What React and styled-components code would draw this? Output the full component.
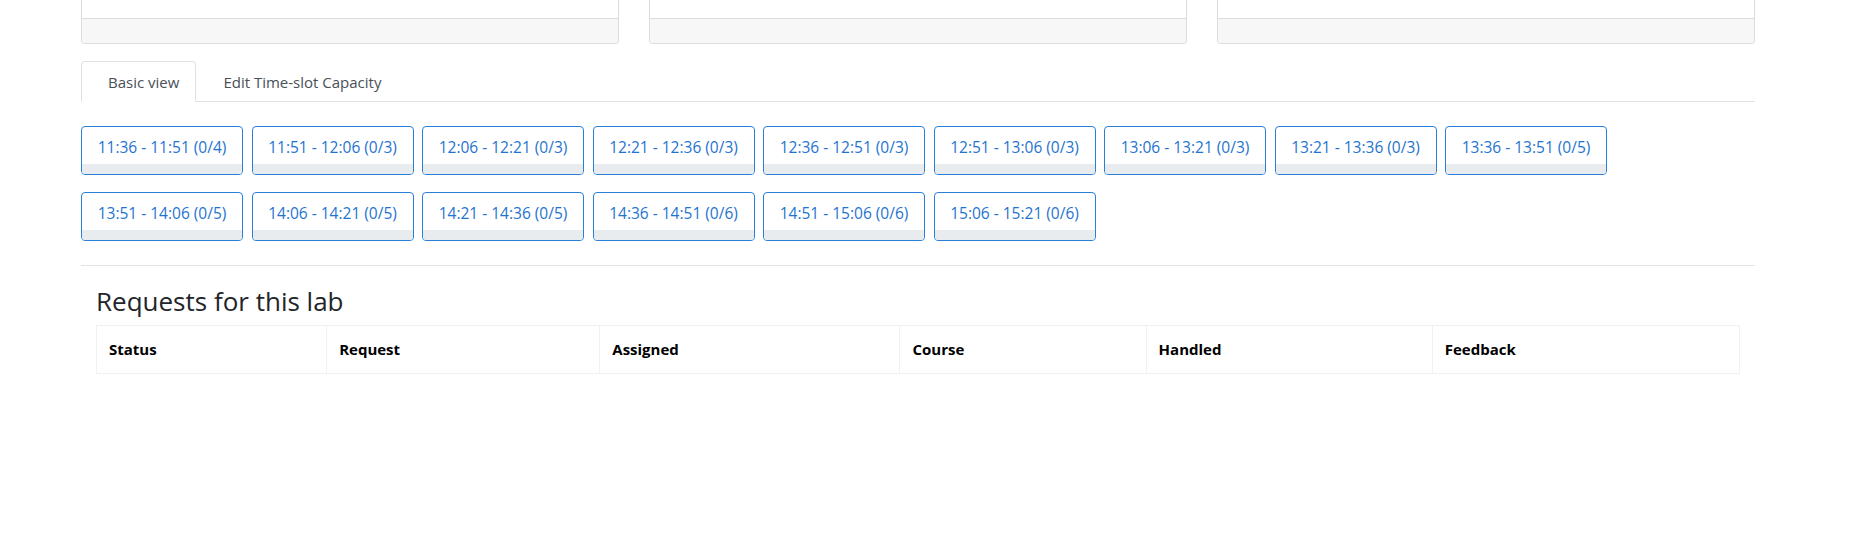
import React from "react";
import styled, { createGlobalStyle } from "styled-components";

const GlobalStyle = createGlobalStyle`
  html, body {
    margin: 0;
    padding: 0;
    background: #ffffff;
  }
  body {
    font-family: "Open Sans", "Noto Sans", Arial, sans-serif;
    font-size: 15px;
    line-height: 1.5;
    color: #212529;
  }
  * { box-sizing: border-box; }
`;

const Page = styled.div`
  width: 1674px;
  margin-left: 81px;
  display: flex;
  flex-direction: column;
`;

const CardRow = styled.div`
  display: grid;
  grid-template-columns: repeat(3, 1fr);
  column-gap: 30px;
`;

const Card = styled.div`
  display: flex;
  flex-direction: column;
  border: 1px solid #dcdcdc;
  border-top: none;
  border-radius: 0 0 4px 4px;
  overflow: hidden;
  background: #fff;
`;

const CardBody = styled.div`
  height: 18px;
`;

const CardFooter = styled.div`
  height: 25px;
  background: #f7f7f7;
  border-top: 1px solid #dcdcdc;
`;

const Tabs = styled.nav`
  display: flex;
  margin-top: 17px;
  border-bottom: 1px solid #dee2e6;
`;

const Tab = styled.div`
  height: 41px;
  margin-bottom: -1px;
  display: flex;
  align-items: center;
  padding: 1px 16px 0 26px;
  font-size: 15px;
  color: #495057;
  border: 1px solid ${(p) => (p.$active ? "#dee2e6" : "transparent")};
  border-bottom-color: ${(p) => (p.$active ? "#ffffff" : "transparent")};
  border-radius: 4px 4px 0 0;
  background: ${(p) => (p.$active ? "#ffffff" : "transparent")};
  cursor: pointer;
`;

const Slots = styled.div`
  display: flex;
  flex-wrap: wrap;
  column-gap: 8.5px;
  row-gap: 17px;
  margin-top: 24px;
`;

const SlotButton = styled.button`
  width: 162px;
  height: 49px;
  padding: 0;
  display: flex;
  flex-direction: column;
  border: 1px solid #2a7fd9;
  border-radius: 4px;
  background: #ffffff;
  overflow: hidden;
  cursor: pointer;
  font-family: inherit;
`;

const SlotLabel = styled.span`
  flex: 1;
  display: flex;
  align-items: center;
  justify-content: center;
  padding-top: 3px;
  font-size: 15.5px;
  color: #1f74d0;
  white-space: nowrap;
`;

const SlotBar = styled.span`
  height: 10px;
  background: #e9ecef;
`;

const Divider = styled.hr`
  margin: 24px 0 0;
  border: 0;
  border-top: 1px solid #e3e3e3;
  width: 100%;
`;

const Section = styled.section`
  padding: 0 15px;
`;

const Heading = styled.h3`
  margin: 20px 0 8px;
  font-size: 26px;
  font-weight: 400;
  line-height: 1.2;
  color: #212529;
`;

const Table = styled.table`
  width: 100%;
  border-collapse: collapse;
  table-layout: fixed;
`;

const Th = styled.th`
  width: ${(p) => p.$w}px;
  padding: 12px 12px;
  text-align: left;
  font-size: 15px;
  font-weight: 700;
  color: #000;
  border: 1px solid #f1f1f1;
`;

const slots = [
  "11:36 - 11:51 (0/4)",
  "11:51 - 12:06 (0/3)",
  "12:06 - 12:21 (0/3)",
  "12:21 - 12:36 (0/3)",
  "12:36 - 12:51 (0/3)",
  "12:51 - 13:06 (0/3)",
  "13:06 - 13:21 (0/3)",
  "13:21 - 13:36 (0/3)",
  "13:36 - 13:51 (0/5)",
  "13:51 - 14:06 (0/5)",
  "14:06 - 14:21 (0/5)",
  "14:21 - 14:36 (0/5)",
  "14:36 - 14:51 (0/6)",
  "14:51 - 15:06 (0/6)",
  "15:06 - 15:21 (0/6)",
];

const columns = [
  ["Status", 230],
  ["Request", 273],
  ["Assigned", 300],
  ["Course", 246],
  ["Handled", 286],
  ["Feedback", 307],
];

export default function App() {
  return (
    <>
      <GlobalStyle />
      <Page>
        <CardRow>
          {[0, 1, 2].map((i) => (
            <Card key={i}>
              <CardBody />
              <CardFooter />
            </Card>
          ))}
        </CardRow>

        <Tabs>
          <Tab $active>Basic view</Tab>
          <Tab>Edit Time-slot Capacity</Tab>
        </Tabs>

        <Slots>
          {slots.map((s) => (
            <SlotButton key={s}>
              <SlotLabel>{s}</SlotLabel>
              <SlotBar />
            </SlotButton>
          ))}
        </Slots>

        <Divider />

        <Section>
          <Heading>Requests for this lab</Heading>
          <Table>
            <thead>
              <tr>
                {columns.map(([label, w]) => (
                  <Th key={label} $w={w}>
                    {label}
                  </Th>
                ))}
              </tr>
            </thead>
          </Table>
        </Section>
      </Page>
    </>
  );
}
